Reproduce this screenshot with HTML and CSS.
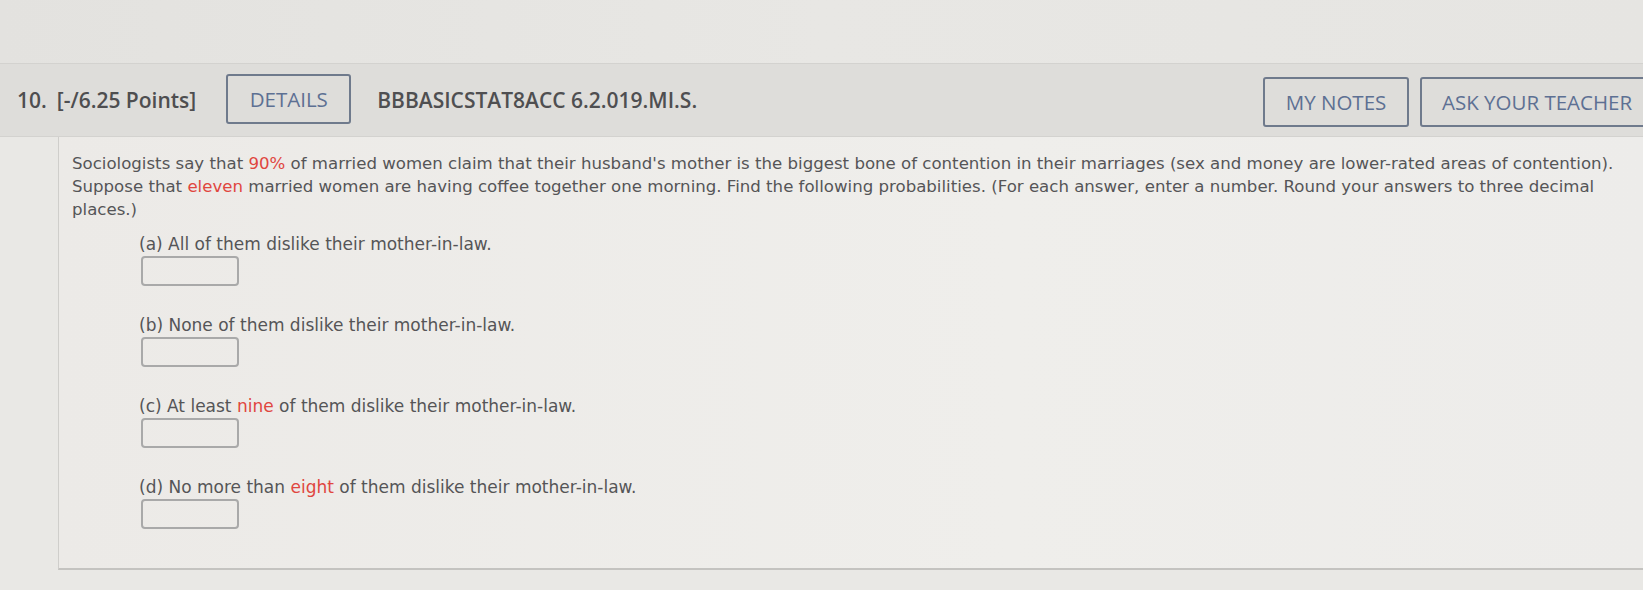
FILE: index.html
```html
<!DOCTYPE html>
<html>
<head>
<meta charset="utf-8">
<link rel="stylesheet" href="styles.css">
</head>
<body>
<div class="page">
  <div class="topband"></div>
  <header class="qhead">
    <span class="qnum">10.</span>
    <span class="qpoints">[-/6.25 Points]</span>
    <button class="btn btn-details">DETAILS</button>
    <span class="qcode">BBBASICSTAT8ACC 6.2.019.MI.S.</span>
    <span class="spacer"></span>
    <button class="btn btn-notes">MY NOTES</button>
    <button class="btn btn-ask">ASK YOUR TEACHER</button>
  </header>
  <section class="qbody">
    <p class="intro">Sociologists say that <span class="red">90%</span> of married women claim that their husband's mother is the biggest bone of contention in their marriages (sex and money are lower-rated areas of contention). Suppose that <span class="red">eleven</span> married women are having coffee together one morning. Find the following probabilities. (For each answer, enter a number. Round your answers to three decimal places.)</p>
    <div class="parts">
      <div class="part">
        <div class="ptext">(a) All of them dislike their mother-in-law.</div>
        <div class="answer"></div>
      </div>
      <div class="part">
        <div class="ptext">(b) None of them dislike their mother-in-law.</div>
        <div class="answer"></div>
      </div>
      <div class="part">
        <div class="ptext">(c) At least <span class="red">nine</span> of them dislike their mother-in-law.</div>
        <div class="answer"></div>
      </div>
      <div class="part">
        <div class="ptext">(d) No more than <span class="red">eight</span> of them dislike their mother-in-law.</div>
        <div class="answer"></div>
      </div>
    </div>
  </section>
</div>
</body>
</html>
```

FILE: styles.css
```css
html, body {
  margin: 0;
  padding: 0;
}
body {
  background: #e9e8e5;
  width: 1643px;
  height: 590px;
  overflow: hidden;
}
.page {
  display: flex;
  flex-direction: column;
}
.topband {
  height: 63px;
  background: linear-gradient(90deg, #e3e2df 0%, #e8e7e4 50%, #e6e5e2 100%);
}
.qhead {
  height: 74px;
  box-sizing: border-box;
  border-top: 1px solid #d3d2cf;
  border-bottom: 1px solid #d3d2cf;
  background: #dedddA;
  display: flex;
  align-items: center;
  padding-left: 17px;
  font-family: "Open Sans", "Liberation Sans", sans-serif;
  font-size: 21px;
  font-weight: 600;
  color: #4e4e50;
  white-space: nowrap;
}
.qnum {
  margin-right: 10px;
}
.qpoints {
  margin-right: 30px;
}
.btn {
  font-family: "Open Sans", "Liberation Sans", sans-serif;
  font-size: 20.5px;
  font-weight: 400;
  color: #5d7093;
  background: transparent;
  border: 2px solid #6f7a8c;
  border-radius: 3px;
  height: 50px;
  box-sizing: border-box;
  padding: 0 18px;
  white-space: nowrap;
}
.btn-details {
  width: 125px;
  margin-right: 26px;
  margin-top: -2px;
}
.qcode {
  color: #4f4f51;
}
.spacer {
  flex: 1;
}
.btn-notes {
  width: 146px;
  margin-right: 11px;
  margin-top: 3px;
}
.btn-ask {
  width: 240px;
  margin-right: -17px;
  padding-left: 20px;
  text-align: left;
  margin-top: 3px;
}
.qbody {
  margin-left: 58px;
  height: 433px;
  box-sizing: border-box;
  border-left: 1px solid #cfcecb;
  border-bottom: 2px solid #c4c3c0;
  background: linear-gradient(90deg, #eceae7 0%, #efeeeb 60%, #edecea 100%);
  padding: 15px 14px 0 13px;
  font-family: "DejaVu Sans", Verdana, sans-serif;
  font-size: 16.6px;
  color: #555557;
}
.intro {
  margin: 0;
  line-height: 23px;
}
.red {
  color: #e0463f;
}
.parts {
  display: flex;
  flex-direction: column;
  gap: 28px;
  padding-left: 67px;
  margin-top: 12px;
  font-size: 17px;
}
.part {
  display: flex;
  flex-direction: column;
  gap: 1px;
}
.ptext {
  line-height: 22px;
}
.answer {
  width: 98px;
  height: 30px;
  box-sizing: border-box;
  border: 2px solid #a9a9a9;
  border-radius: 4px;
  margin-left: 2px;
}
```
